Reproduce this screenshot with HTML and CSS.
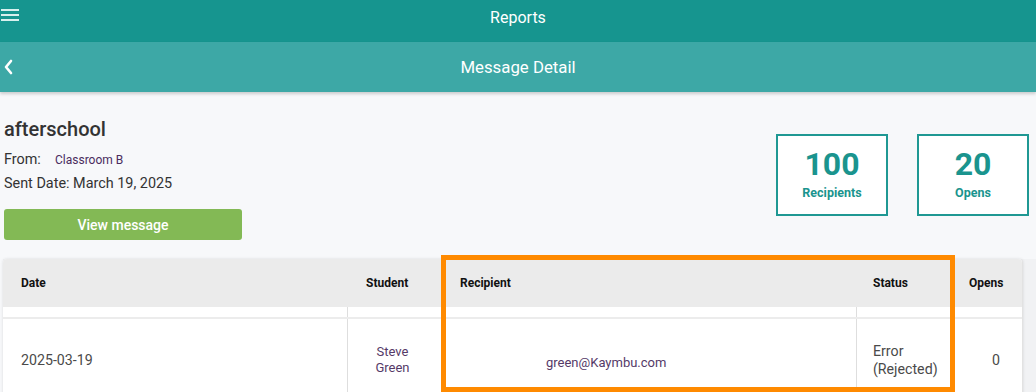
FILE: index.html
```html
<!DOCTYPE html>
<html lang="en">
<head>
<meta charset="utf-8">
<title>Message Detail</title>
<link rel="stylesheet" href="styles.css">
</head>
<body>
<header class="topbar">
  <svg class="menu-icon" width="20" height="14" viewBox="0 0 20 14" aria-hidden="true">
    <rect x="1" y="1" width="18" height="2" fill="#d8f0ee"/>
    <rect x="1" y="6" width="18" height="2" fill="#d8f0ee"/>
    <rect x="1" y="11" width="18" height="2" fill="#d8f0ee"/>
  </svg>
  <div class="topbar-title">Reports</div>
  <div></div>
</header>
<nav class="subbar">
  <svg class="back-icon" width="10" height="16" viewBox="0 0 10 16" aria-hidden="true">
    <path d="M8 2 L3 8 L8 14" fill="none" stroke="#ffffff" stroke-width="2.6" stroke-linecap="round" stroke-linejoin="round"/>
  </svg>
  <div class="subbar-title">Message Detail</div>
  <div></div>
</nav>
<main class="content">
  <section class="summary">
    <div class="info">
      <h1 class="title">afterschool</h1>
      <div class="meta-row"><span class="label">From:</span><span class="from-value">Classroom B</span></div>
      <div class="meta-row">Sent Date: March 19, 2025</div>
      <button class="view-btn">View message</button>
    </div>
    <div class="stats">
      <div class="stat-box"><div class="stat-num">100</div><div class="stat-label">Recipients</div></div>
      <div class="stat-box"><div class="stat-num">20</div><div class="stat-label">Opens</div></div>
    </div>
  </section>
  <section class="table-area">
    <div class="table">
      <div class="row head">
        <div class="cell c-date">Date</div>
        <div class="cell c-student">Student</div>
        <div class="cell c-recipient">Recipient</div>
        <div class="cell c-status">Status</div>
        <div class="cell c-opens">Opens</div>
      </div>
      <div class="row spacer">
        <div class="cell"></div>
        <div class="cell line-left"></div>
        <div class="cell"></div>
        <div class="cell line-left"></div>
        <div class="cell"></div>
      </div>
      <div class="row data">
        <div class="cell c-date">2025-03-19</div>
        <div class="cell c-student line-left"><span class="name">Steve<br>Green</span></div>
        <div class="cell c-recipient"><span class="email">green@Kaymbu.com</span></div>
        <div class="cell c-status line-left">Error<br>(Rejected)</div>
        <div class="cell c-opens">0</div>
      </div>
    </div>
    <div class="highlight"></div>
  </section>
</main>
</body>
</html>
```

FILE: styles.css
```css
* { box-sizing: border-box; }

html, body {
  margin: 0;
  padding: 0;
  width: 1036px;
  height: 392px;
  overflow: hidden;
}

body {
  background: #f7f8fa;
  font-family: Roboto, "Liberation Sans", Arial, sans-serif;
  color: #333333;
}

.topbar {
  height: 42px;
  background: #16958f;
  display: grid;
  grid-template-columns: 1fr auto 1fr;
  align-items: start;
  padding-top: 8px;
}

.menu-icon {
  display: block;
}

.topbar-title {
  color: #ffffff;
  font-size: 16px;
  line-height: 20px;
}

.subbar {
  height: 50px;
  background: #3da8a6;
  display: grid;
  grid-template-columns: 1fr auto 1fr;
  align-items: center;
  box-shadow: 0 2px 3px rgba(0, 0, 0, 0.18);
  position: relative;
}

.back-icon {
  display: block;
  margin-left: 3px;
}

.subbar-title {
  color: #ffffff;
  font-size: 16.8px;
  line-height: 20px;
}

.summary {
  display: flex;
  justify-content: space-between;
  padding: 0 7px 0 4px;
}

.info {
  padding-top: 25px;
}

.title {
  margin: 0;
  font-size: 20px;
  line-height: 24px;
  font-weight: 500;
  color: #333333;
}

.meta-row {
  font-size: 14.4px;
  line-height: 23px;
  color: #333333;
}

.meta-row:first-of-type {
  margin-top: 7px;
}

.label {
  display: inline-block;
  width: 51px;
}

.from-value {
  font-size: 12px;
  color: #4a2c5e;
}

.view-btn {
  display: block;
  margin-top: 14px;
  width: 238px;
  height: 31px;
  border: 0;
  border-radius: 3px;
  background: #83b955;
  color: #ffffff;
  font-family: Roboto, "Liberation Sans", Arial, sans-serif;
  font-size: 14px;
  font-weight: 500;
  padding: 0;
}

.stats {
  display: flex;
  gap: 29px;
  margin-top: 42px;
  align-self: flex-start;
}

.stat-box {
  width: 112px;
  height: 82px;
  border: 2px solid #1f9893;
  background: #ffffff;
  text-align: center;
  padding-top: 10px;
  color: #1a948e;
}

.stat-num {
  font-size: 32px;
  line-height: 36px;
  font-weight: 700;
}

.stat-label {
  margin-top: 3px;
  font-size: 12.5px;
  line-height: 16px;
  font-weight: 700;
}

.table-area {
  position: relative;
  margin-top: 19px;
  margin-left: 3px;
  background: #f1f2f4;
  height: 140px;
}

.table {
  width: 1020px;
  background: #ffffff;
  border-radius: 4px 4px 0 0;
  box-shadow: 0 0 3px rgba(0, 0, 0, 0.12);
  border-right: 1px solid #e2e2e2;
  height: 140px;
}

.row {
  display: grid;
  grid-template-columns: 344px 94px 415px 99px 68px;
}

.row.head {
  height: 48px;
  background: #ebebeb;
  align-items: center;
  font-size: 12px;
  font-weight: 700;
  color: #111111;
  border-radius: 4px 4px 0 0;
}

.row.head .c-date { padding-left: 18px; }
.row.head .c-student { padding-left: 19px; }
.row.head .c-recipient { padding-left: 19px; }
.row.head .c-status { padding-left: 17px; }
.row.head .c-opens { padding-left: 14px; }

.row.spacer {
  height: 12px;
  border-bottom: 2px solid #ececec;
}

.line-left {
  border-left: 1px solid #dedede;
}

.row.data {
  height: 82px;
  font-size: 14.2px;
  color: #4a4a4a;
}

.row.data .cell {
  display: flex;
  align-items: center;
}

.row.data .c-date { padding-left: 18px; }

.row.data .c-student {
  justify-content: center;
  text-align: center;
  padding-right: 4px;
}

.name {
  font-size: 13px;
  line-height: 16px;
  color: #553a68;
}

.row.data .c-recipient { padding-left: 105px; padding-top: 4px; }

.email {
  font-size: 13px;
  color: #553a68;
}

.row.data .c-status {
  padding-left: 16px;
  line-height: 18px;
}

.row.data .c-opens { padding-left: 37px; }

.highlight {
  position: absolute;
  left: 438px;
  top: -4px;
  width: 514px;
  height: 137px;
  border: 5px solid #ff8a00;
  pointer-events: none;
}
```
